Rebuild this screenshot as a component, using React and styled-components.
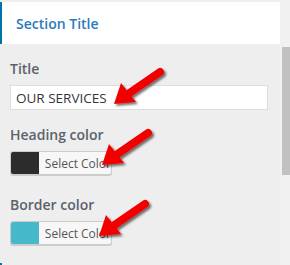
import React from 'react';
import styled, { createGlobalStyle } from 'styled-components';

const GlobalStyle = createGlobalStyle`
  html, body {
    margin: 0;
    padding: 0;
    background: #eeeeee;
  }
  body {
    font-family: "Open Sans", "Noto Sans", sans-serif;
  }
`;

const Frame = styled.div`
  position: relative;
  display: flex;
  width: 290px;
  height: 265px;
  overflow: hidden;
  background: #eeeeee;
`;

const Main = styled.div`
  width: 280px;
  padding-top: 2px;
  display: flex;
  flex-direction: column;
`;

const SectionHeader = styled.div`
  height: 42px;
  box-sizing: border-box;
  background: #ffffff;
  border-left: 2px solid #0073aa;
  padding-left: 14px;
  display: flex;
  align-items: center;
  color: #2b7bb9;
  font-size: 14px;
  font-weight: 600;
`;

const Panel = styled.div`
  padding: 15px 12px 0 10px;
  display: flex;
  flex-direction: column;
`;

const Control = styled.div`
  display: flex;
  flex-direction: column;
  margin-bottom: ${({ $space }) => $space}px;
`;

const Label = styled.label`
  font-size: 14px;
  line-height: 20px;
  font-weight: 600;
  color: #5a626b;
  margin-bottom: 6px;
`;

const TextInput = styled.div`
  height: 25px;
  box-sizing: border-box;
  border: 1px solid #dddddd;
  background: #ffffff;
  padding-left: 5px;
  display: flex;
  align-items: center;
  font-size: 13.5px;
  color: #32373c;
`;

const Picker = styled.div`
  display: flex;
  width: 102px;
  height: 24px;
  box-sizing: border-box;
  border: 1px solid #cccccc;
  border-radius: 3px;
  box-shadow: 0 1px 0 #cccccc;
  overflow: hidden;
  background: #f7f7f7;
`;

const Swatch = styled.span`
  width: 30px;
  background: ${({ $color }) => $color};
`;

const PickerText = styled.span`
  padding-left: 6px;
  display: flex;
  align-items: center;
  font-size: 12px;
  color: #555555;
  white-space: nowrap;
`;

const NextSection = styled.div`
  margin-top: auto;
  height: 2px;
  border-left: 2px solid #0073aa;
`;

const Track = styled.div`
  width: 10px;
  background: #f1f1f1;
  padding-top: 47px;
`;

const Thumb = styled.div`
  width: 8px;
  height: 128px;
  margin-left: 2px;
  background: #c1c1c1;
`;

const ArrowSvg = styled.svg`
  position: absolute;
  left: ${({ $x }) => $x}px;
  top: ${({ $y }) => $y}px;
  overflow: visible;
`;

const Arrow = ({ x, y }) => (
  <ArrowSvg $x={x} $y={y} width="60" height="42" viewBox="0 0 60 42">
    <defs>
      <filter id={`sh${x}${y}`} x="-30%" y="-30%" width="160%" height="160%">
        <feDropShadow dx="2" dy="2" stdDeviation="1" floodColor="#000" floodOpacity="0.55" />
      </filter>
    </defs>
    <g filter={`url(#sh${x}${y})`} fill="#f20000">
      <line x1="50" y1="5" x2="18" y2="27" stroke="#f20000" strokeWidth="8" strokeLinecap="round" />
      <polygon points="4,37 11,16 26,35" />
    </g>
  </ArrowSvg>
);

const ColorControl = ({ label, color, space }) => (
  <Control $space={space}>
    <Label>{label}</Label>
    <Picker>
      <Swatch $color={color} />
      <PickerText>Select Color</PickerText>
    </Picker>
  </Control>
);

const App = () => {
  return (
    <>
      <GlobalStyle />
      <Frame>
        <Main>
          <SectionHeader>Section Title</SectionHeader>
          <Panel>
            <Control $space={15}>
              <Label>Title</Label>
              <TextInput>OUR SERVICES</TextInput>
            </Control>
            <ColorControl label="Heading color" color="#2c2c2c" space={20} />
            <ColorControl label="Border color" color="#45b9ca" space={0} />
          </Panel>
          <NextSection />
        </Main>
        <Track>
          <Thumb />
        </Track>
        <Arrow x={110} y={67} />
        <Arrow x={98} y={128} />
        <Arrow x={95} y={199} />
      </Frame>
    </>
  );
};

export default App;
